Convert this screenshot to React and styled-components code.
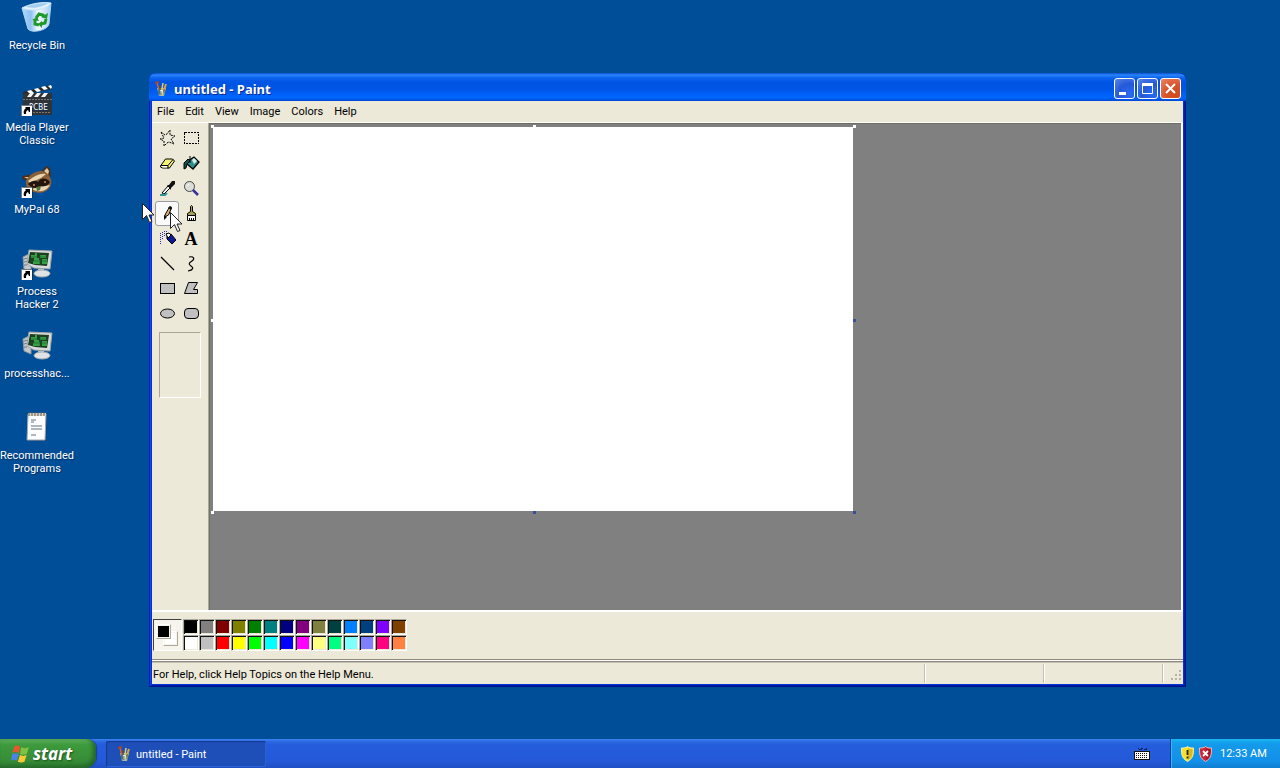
import React from 'react';
import styled, { createGlobalStyle, css } from 'styled-components';

const GlobalStyle = createGlobalStyle`
  *, *::before, *::after { box-sizing: border-box; }
  body {
    margin: 0;
    font-family: Roboto, "Noto Sans", sans-serif;
    font-size: 11px;
    line-height: 13px;
    color: #000;
    cursor: default;
  }
  button {
    margin: 0;
    padding: 0;
    border: 0;
    background: none;
    font: inherit;
    color: inherit;
  }
  svg { display: block; }
`;

const Desktop = styled.div`
  position: relative;
  display: flex;
  flex-direction: column;
  min-height: 100vh;
  overflow: hidden;
  background: #004e98;
`;

const IconColumn = styled.main`
  flex: 1;
  display: flex;
  flex-direction: column;
  align-items: flex-start;
`;

const Shortcut = styled.button`
  display: flex;
  flex-direction: column;
  align-items: center;
  width: 74px;
  height: 82px;
  padding-top: 2px;
  gap: 5px;
  color: #fff;
  text-align: center;
  text-shadow: 1px 1px 1px #00305f;
`;

const AppWindow = styled.section`
  position: absolute;
  top: 73px;
  right: 94px;
  bottom: 81px;
  left: 149px;
  display: flex;
  flex-direction: column;
  padding: 0 3px 3px;
  border-radius: 7px 7px 0 0;
  background: #0831d9;
  box-shadow: inset 1px 0 #0019cf, inset -1px -1px #00138c, inset 2px 0 #0a45e6, inset -2px -2px #001ea0;
`;

const TitleBar = styled.header`
  display: flex;
  align-items: center;
  height: 28px;
  margin: 0 -3px;
  padding: 3px 5px 0 4px;
  border-radius: 7px 7px 0 0;
  background: linear-gradient(#0a4fd0 0, #2a86fb 2px, #0a62ee 5px, #0054e3 9px, #0055e5 16px, #0062fb 22px, #0066ff 25px, #0046d4 28px);
`;

const WindowTitle = styled.h1`
  flex: 1;
  margin: 0 0 0 5px;
  font-family: "Noto Sans", sans-serif;
  font-size: 13px;
  line-height: 16px;
  font-weight: 700;
  color: #fff;
  text-shadow: 1px 1px #0a2a8c;
`;

const CaptionButtons = styled.div`
  display: flex;
  gap: 2px;
`;

const CaptionButton = styled.button`
  width: 21px;
  height: 21px;
  border: 1px solid #fff;
  border-radius: 3px;
  background: ${p => p.$close
    ? 'radial-gradient(circle at 75% 80%, #d04a1c, #d9532c 45%, #e88768)'
    : 'radial-gradient(circle at 75% 80%, #2a6cf0, #2459d8 50%, #5a86e8)'};
`;

const Client = styled.div`
  flex: 1;
  display: flex;
  flex-direction: column;
  min-height: 0;
  background: #ece9d8;
`;

const MenuBar = styled.nav`
  display: flex;
  height: 22px;
  padding: 0 0 1px;
  border-bottom: 1px solid #fff;
`;

const MenuItem = styled.button`
  padding: 0 6px 0 5px;
`;

const Workspace = styled.div`
  flex: 1;
  display: flex;
  min-height: 0;
  border-right: 2px solid #fff;
  border-bottom: 2px solid #fff;
`;

const ToolBox = styled.aside`
  width: 57px;
  padding: 3px;
  border-right: 1px solid #aca899;
`;

const ToolGrid = styled.div`
  display: grid;
  grid-template-columns: repeat(2, 24px);
  grid-auto-rows: 25px;
`;

const ToolButton = styled.button`
  display: grid;
  place-items: center;
  ${p => p.$active && css`
    border: 1px solid #9a9aa4;
    border-radius: 3px;
    background: #fafafa;
  `}
`;

const LetterTool = styled.span`
  font-family: "Liberation Serif", serif;
  font-size: 18px;
  line-height: 18px;
  font-weight: 700;
`;

const ToolOptions = styled.div`
  width: 42px;
  height: 66px;
  margin: 6px 0 0 4px;
  border: 1px solid;
  border-color: #aca899 #fff #fff #aca899;
`;

const Viewport = styled.div`
  flex: 1;
  min-width: 0;
  overflow: hidden;
  padding: 1px;
  background: #808080;
  border-top: 1px solid #716f64;
  border-left: 1px solid #716f64;
`;

const Paper = styled.div`
  position: relative;
  width: 644px;
  height: 388px;
  border: 2px solid #808080;
  background: #fff;
  background-clip: padding-box;
`;

const handleX = { left: '-2px', center: '320px', right: '640px' };
const handleY = { top: '-2px', middle: '192px', bottom: '384px' };

const Handle = styled.i`
  position: absolute;
  left: ${p => handleX[p.$x]};
  top: ${p => handleY[p.$y]};
  width: 3px;
  height: 3px;
  background: ${p => (p.$live ? '#3a4f9c' : '#fff')};
`;

const ColorBox = styled.div`
  display: flex;
  align-items: flex-start;
  gap: 1px;
  height: 48px;
  padding: 7px 1px;
  border-bottom: 1px solid #8d8a7c;
`;

const CurrentColors = styled.div`
  position: relative;
  width: 29px;
  height: 32px;
  border: 1px solid;
  border-color: #404040 #fff #fff #404040;
  background: #f6f4ec;
`;

const ColorChip = styled.span`
  position: absolute;
  left: ${p => p.$at}px;
  top: ${p => p.$at + 2}px;
  width: 15px;
  height: 15px;
  border: 1px solid;
  border-color: #fff #aca899 #aca899 #fff;
  background: ${p => p.$color};
  box-shadow: inset 0 0 0 1px #f6f4ec;
`;

const Palette = styled.div`
  display: grid;
  grid-template-columns: repeat(14, 16px);
  grid-auto-rows: 16px;
`;

const Swatch = styled.button`
  border: 1px solid;
  border-color: #aca899 #fff #fff #aca899;
  background: ${p => p.$color};
  box-shadow: inset 1px 1px #111, inset -1px -1px #ece9d8;
`;

const StatusBar = styled.footer`
  display: grid;
  grid-template-columns: 1fr 119px 119px 19px;
  height: 24px;
  padding: 3px 0 1px;
  border-top: 1px solid #fff;
  box-shadow: inset 0 1px #8d8a7c, inset 0 2px #c5c2b4;
`;

const StatusCell = styled.div`
  padding: 4px 1px 0;
  border-right: ${p => (p.$last ? 0 : 1)}px solid #fff;
  box-shadow: ${p => (p.$last ? 'none' : 'inset -1px 0 #c2bfae')};
`;

const Grip = styled.svg`
  margin: 1px 0 0 5px;
`;

const TaskBar = styled.footer`
  display: flex;
  height: 29px;
  background: linear-gradient(#3c81f3 0, #2a66e0 3px, #245ddb 6px, #2459d8 22px, #1f4fc4 29px);
`;

const StartButton = styled.button`
  display: flex;
  align-items: center;
  gap: 3px;
  width: 96px;
  padding-left: 10px;
  border-radius: 0 9px 11px 0;
  background: linear-gradient(#5eac56 0, #53a653 2px, #3c9a3c 6px, #388e38 20px, #2f7d2f 29px);
  box-shadow: inset -3px -2px 4px #22652a, 1px 0 1px #1a3f9c;
  font-family: "Noto Sans", sans-serif;
  font-size: 17px;
  line-height: 24px;
  font-style: italic;
  font-weight: 700;
  color: #fff;
  text-shadow: 1px 1px 2px #1f4f20;
`;

const TaskButton = styled.button`
  display: flex;
  align-items: center;
  gap: 4px;
  width: 160px;
  margin: 2px auto 1px 10px;
  padding-left: 10px;
  border-radius: 2px;
  background: #1e4fb9;
  box-shadow: inset 1px 1px 1px #153a8f, inset -1px -1px #2a62d4;
  color: #fff;
`;

const InputMethod = styled.button`
  padding: 0 20px;
`;

const Tray = styled.div`
  display: flex;
  align-items: center;
  gap: 5px;
  width: 110px;
  padding: 0 0 0 10px;
  border-left: 1px solid #0a3c9c;
  background: linear-gradient(#19b9f3 0, #149bea 4px, #1290e8 22px, #0f7fd0 29px);
  box-shadow: inset 1px 0 #35b8f5;
  color: #fff;
`;

const Clock = styled.time`
  margin-left: 3px;
`;

const Pointer = styled.svg`
  position: absolute;
  left: ${p => p.$x}px;
  top: ${p => p.$y}px;
  pointer-events: none;
`;

const ShortcutArrow = () => (
  <g shapeRendering="crispEdges">
    <rect x="0" y="21" width="11" height="11" fill="#fff" stroke="#222" strokeWidth="0.6" />
    <path d="M4 23h5v5h-1l-1-2c-2 1-2 2-2 4H3c-1-3 0-4 2-6z" fill="#000" shapeRendering="auto" />
  </g>
);

const RecycleIcon = () => (
  <svg width="32" height="32" viewBox="0 0 32 32">
    <defs>
      <linearGradient id="bin"><stop stopColor="#b4d8fa" /><stop offset=".3" stopColor="#8cc0f4" /><stop offset=".55" stopColor="#f4fbff" /><stop offset="1" stopColor="#a9cff2" /></linearGradient>
    </defs>
    <path d="M1 6l29-5-2 21c-1 6-17 10-21 5z" fill="url(#bin)" stroke="#a9d2f6" />
    <path d="M1 6C6 3 20-1 30 1c-4 7-20 9-29 5z" fill="#e2f1fc" stroke="#c8e4fa" />
    <path d="M5 5c6-3 15-4 22-4-5 4-15 6-22 4z" fill="#a3cdf0" />
    <g fill="none" stroke="#1f9a2a" strokeWidth="3">
      <path d="M15 16l3-4 4 1 1 2M25 17l-1 4-4 1M18 23l-4-1v-4" />
    </g>
    <path d="M20 15l6 2 1-6zM21 19v7l-4-4zM11 18l5-3 2 4z" fill="#1f9a2a" />
  </svg>
);

const ClapperIcon = () => (
  <svg width="32" height="32" viewBox="0 0 32 32">
    <path d="M2 8L31 1v4L2 11z" fill="#26282b" />
    <path d="M6 7l4-1 3 3-4 1zM13 5l4-1 3 3-4 1zM20 3l4-1 3 3-4 1zM27 2l3-1 1 2-1 2z" fill="#fff" />
    <rect x="2" y="9" width="29" height="22" fill="#303338" />
    <path d="M9 9h4l-3 4H6zM16 9h4l-3 4h-4zM23 9h4l-3 4h-4z" fill="#f5f5f5" />
    <path d="M2 15.500h29M3 28.500h27" stroke="#777" strokeDasharray="2 1" />
    <text x="8" y="26" fontFamily="DejaVu Sans Condensed, sans-serif" fontSize="8" fill="#fff">PCBE</text>
    <ShortcutArrow />
  </svg>
);

const RaccoonIcon = () => (
  <svg width="32" height="32" viewBox="0 0 32 32">
    <path d="M20 6l5-6 4 2 1 8-3 4zM2 14l-1-4 7-1 6-2-2 6z" fill="#4a2e1c" />
    <path d="M23 5l3-3 2 3-1 4zM3 11l5 0-1 2z" fill="#e5c9a0" />
    <path d="M5 15C8 8 18 3 24 6c6 4 8 10 5 15-3 5-10 7-16 5C7 24 4 20 5 15z" fill="#8a6038" />
    <path d="M7 15c6-5 12-8 18-7l-5 4-11 5zM11 23c6 4 14 3 18-4l-5 1-7 1z" fill="#e9d5b2" />
    <path d="M7 18c4-4 8-4 10-2 3-5 9-4 12 0-2 4-6 5-9 4-4 3-9 3-13-2z" fill="#21150f" />
    <circle cx="13" cy="19" r="1" fill="#cf8b3e" /><circle cx="24" cy="16" r="1" fill="#cf8b3e" />
    <path d="M15 21l5-1-1 4-3 1z" fill="#4d7a3a" />
    <ShortcutArrow />
  </svg>
);

const MonitorIcon = ({ linked }) => (
  <svg width="32" height="32" viewBox="0 0 32 32">
    <path d="M2 9l8-4v19l-7-3z" fill="#c3c8cc" stroke="#8b959d" />
    <path d="M3 11l4-1M3 14l4-1M3 17h3" stroke="#6f7b85" />
    <path d="M8 2l23 1-2 18-16-1-7-4z" fill="#d9dcdc" stroke="#9ca4a5" />
    <path d="M9 4l19 1-2 13-12-1-7-2z" fill="#1c3d22" />
    <path d="M10 7h4V5h2v5h2v3h-5v-3h-3zM19 7h6v3h-6zM12 13h3v-1h4v4h-7zM21 11h5v5h-5z" fill="#35a045" />
    <path d="M10 9h17M9 13h17M19 5v12" stroke="#1c5a2a" strokeWidth=".6" />
    <path d="M17 21l6 0v3l-6 1z" fill="#c3c7c9" />
    <ellipse cx="21" cy="25.500" rx="8" ry="3.500" fill="#dfe3e5" stroke="#a4abaf" />
    {linked && <ShortcutArrow />}
  </svg>
);

const NotepadIcon = () => (
  <svg width="32" height="32" viewBox="0 0 32 32">
    <path d="M8 3h18l-1 26H7z" fill="#27384d" opacity=".6" />
    <path d="M7 2h18l-1 26H6z" fill="#fdfdfd" stroke="#9aa6b5" />
    <path d="M7 1h18v3H7z" fill="#d6d2c8" />
    <path d="M8 0v4m3-4v4m3-4v4m3-4v4m3-4v4m3-4v4" stroke="#665a4c" />
    <path d="M10 8h5M10 10h3M10 14h11M10 17h11M10 23h5" stroke="#65717e" />
  </svg>
);

const PaintIcon = ({ size = 16 }) => (
  <svg width={size} height={size} viewBox="0 0 16 16">
    <path d="M4 7l9 0-2 8H6z" fill="#a9b596" />
    <path d="M4 2l2 7" stroke="#c9653b" strokeWidth="1.500" />
    <path d="M7 4l0 6" stroke="#5e4a30" strokeWidth="1.500" />
    <path d="M9 8l1-6" stroke="#d9c990" strokeWidth="1.500" />
    <path d="M11 9l2-6" stroke="#d9a939" strokeWidth="2" />
    <path d="M5 8v4l2 3V9z" fill="#568da0" /><path d="M7 9h3l-1 6z" fill="#eef2e4" /><path d="M10 9l2-1-1 6z" fill="#60713a" />
    <path d="M2 2l4-1" stroke="#a0452f" strokeWidth="2" /><path d="M8 10v4M6 9v4" stroke="#333" strokeWidth=".6" />
  </svg>
);

const FlagIcon = () => (
  <svg width="20" height="20" viewBox="0 0 18 18">
    <path d="M4 2c2-1 4-1 5 0L8 8C6 7 4 7 2 8z" fill="#e8582c" />
    <path d="M10 3c2 1 4 1 7 0l-2 6c-2 1-4 1-6 0z" fill="#7fc241" />
    <path d="M2 9c2-1 4-1 6 0l-2 6c-2-1-3-1-5 0z" fill="#4b83e8" />
    <path d="M9 10c2 1 4 1 6 0l-2 6c-2 1-4 1-6 0z" fill="#f9c935" />
  </svg>
);

const KeyboardIcon = () => (
  <svg width="16" height="14" viewBox="0 0 16 14" shapeRendering="crispEdges">
    <path d="M4 1h1v1h2V1h2v1h3V1h1v2h-3V2H8v1H5V2H4z" fill="#0c245e" />
    <rect x="0" y="4" width="16" height="9" fill="#111" />
    <path d="M1 5h14v7H1z" fill="#fff" />
    <path d="M2 6.500h12M2 8.500h12M2 10.500h12" stroke="#111" strokeDasharray="1 1" />
  </svg>
);

const ShieldIcon = ({ danger }) => (
  <svg width="13" height="16" viewBox="0 0 13 16">
    <path d="M6.500.5C8 2 10 2 12.500 2c0 6 0 10-6 13.500C.5 12 .5 8 .5 2 3 2 5 2 6.500.5z" fill={danger ? '#cf2435' : '#f8e02d'} stroke={danger ? '#dfbfc5' : '#f6efae'} />
    <path d="M7 2c1 1 3 1 4.500 1C12 8 11 12 7 14z" fill={danger ? '#a61526' : '#d9b91c'} />
    {danger
      ? <path d="M4 5l5 5M9 5l-5 5" stroke="#fff" strokeWidth="1.800" />
      : <path d="M6.500 4v5M6.500 10.500v2" stroke="#222" strokeWidth="1.800" />}
  </svg>
);

const toolArt = {
  freeform: <path d="M2 2l4 3 2-1 3-4 0 5 5 1-4 3 3 5-5-2-2 1-3 3 0-5-4-2 4-1z" fill="none" stroke="#000" strokeDasharray="2 1" />,
  select: <path d="M1.500 2.500h14v11h-14z" fill="none" stroke="#000" strokeDasharray="2 1" shapeRendering="crispEdges" />,
  eraser: <>
    <path d="M1.500 11l5-7h7l2 2-5 7h-7l-2-1z" fill="#f4f07a" stroke="#000" />
    <path d="M2 10.500h7l5-6M9 10.500v3" fill="none" stroke="#000" /><path d="M3 11h5v1.500H4z" fill="#fff" />
  </>,
  fill: <>
    <path d="M5 6l6-4 5 5-6 7-6-5z" fill="#2f8f88" stroke="#000" strokeWidth="1.300" />
    <path d="M9 5l2-2 3 3-3 3z" fill="#d6eeea" />
    <path d="M7 1v7" stroke="#000" /><path d="M1 14V8l4-4 2 2-3 3-1 4z" fill="#164f52" stroke="#000" />
  </>,
  picker: <>
    <path d="M3 13l6-7 2 2-6 6z" fill="#fff" stroke="#000" />
    <path d="M8 5l2 0 3-4 3 0v3l-4 4v2z" fill="#111" /><path d="M1 15h5l2-2" fill="none" stroke="#2f9a93" strokeWidth="2" />
  </>,
  zoom: <>
    <circle cx="6.500" cy="6.500" r="5" fill="#dcdcd8" stroke="#444" /><path d="M4 6l2-2" stroke="#fff" />
    <path d="M10 10l5 5" stroke="#33339a" strokeWidth="2.500" />
  </>,
  pencil: <>
    <path d="M5.500 12l1-3 4-7 2 1-3 7z" fill="#dcb27a" stroke="#000" /><path d="M5 15v-5l3 2zM9 3l2-2 2 1-1 3z" fill="#111" />
  </>,
  brush: <>
    <path d="M7.500 1.500q1-2 2 0v5l3 2v2h-8v-2l3-2z" fill="#a3a050" stroke="#000" />
    <path d="M4.500 10.500h8v5h-8z" fill="#fff" stroke="#000" /><path d="M6.500 13v3M8.500 13v3M10.500 13v3" stroke="#000" />
  </>,
  spray: <>
    <path d="M1.500 3v11M3.500 2v8M5.500 1v6M7.500 1v4" stroke="#2a2ab8" strokeDasharray="1 1" />
    <path d="M8 6l4-2 5 6-4 4-5-5z" fill="#111a96" stroke="#000" /><path d="M7 4l3-1 2 2-3 3z" fill="#fff" stroke="#000" />
  </>,
  line: <path d="M2 2l13 13" stroke="#000" strokeWidth="1.200" />,
  curve: <path d="M6 2c5-1 6 2 3 4s-4 3-1 5 2 4-3 5" fill="none" stroke="#000" strokeWidth="1.200" />,
  rect: <path d="M1.500 3.500h14v10h-14z" fill="#c0c0c0" stroke="#000" shapeRendering="crispEdges" />,
  polygon: <path d="M5.500 2.500h9l-4 7h4v4H1.500z" fill="#c0c0c0" stroke="#000" />,
  ellipse: <ellipse cx="8.500" cy="8.500" rx="7" ry="4.500" fill="#c0c0c0" stroke="#000" />,
  rounded: <rect x="1.500" y="3.500" width="14" height="10" rx="3.500" fill="#c0c0c0" stroke="#000" />,
};

const tools = [
  ['Free-Form Select', 'freeform'], ['Select', 'select'],
  ['Eraser', 'eraser'], ['Fill With Color', 'fill'],
  ['Pick Color', 'picker'], ['Magnifier', 'zoom'],
  ['Pencil', 'pencil'], ['Brush', 'brush'],
  ['Airbrush', 'spray'], ['Text', 'text'],
  ['Line', 'line'], ['Curve', 'curve'],
  ['Rectangle', 'rect'], ['Polygon', 'polygon'],
  ['Ellipse', 'ellipse'], ['Rounded Rectangle', 'rounded'],
];

const colors = [
  '#000000', '#808080', '#800000', '#808000', '#008000', '#008080', '#000080', '#800080', '#808040', '#004040', '#0080ff', '#004080', '#8000ff', '#804000',
  '#ffffff', '#c0c0c0', '#ff0000', '#ffff00', '#00ff00', '#00ffff', '#0000ff', '#ff00ff', '#ffff80', '#00ff80', '#80ffff', '#8080ff', '#ff0080', '#ff8040',
];

const handles = [
  ['left', 'top'], ['center', 'top'], ['right', 'top'], ['left', 'middle'], ['left', 'bottom'],
  ['right', 'middle', true], ['center', 'bottom', true], ['right', 'bottom', true],
];

const shortcuts = [
  ['Recycle Bin', <RecycleIcon />],
  ['Media Player Classic', <ClapperIcon />],
  ['MyPal 68', <RaccoonIcon />],
  ['Process Hacker 2', <MonitorIcon linked />],
  ['processhac...', <MonitorIcon />],
  ['Recommended Programs', <NotepadIcon />],
];

const MousePointer = ({ x, y }) => (
  <Pointer $x={x} $y={y} width="13" height="21" viewBox="0 0 13 21">
    <path d="M.5.5v16l4-4 3 7 2.500-1-3-6.500H12z" fill="#fff" stroke="#222" />
  </Pointer>
);

export default function App() {
  return (
    <Desktop>
      <GlobalStyle />
      <IconColumn>
        {shortcuts.map(([label, icon]) => (
          <Shortcut key={label}>{icon}<span>{label}</span></Shortcut>
        ))}
      </IconColumn>

      <AppWindow>
        <TitleBar>
          <PaintIcon />
          <WindowTitle>untitled - Paint</WindowTitle>
          <CaptionButtons>
            <CaptionButton aria-label="Minimize">
              <svg width="19" height="19"><path d="M4 13h7v3H4z" fill="#fff" /></svg>
            </CaptionButton>
            <CaptionButton aria-label="Maximize">
              <svg width="19" height="19"><path d="M4.500 5h10v9.500h-10z" fill="none" stroke="#fff" /><path d="M4 4h11v3H4z" fill="#fff" /></svg>
            </CaptionButton>
            <CaptionButton $close aria-label="Close">
              <svg width="19" height="19"><path d="M5 5l9 9M14 5l-9 9" stroke="#fff" strokeWidth="2" /></svg>
            </CaptionButton>
          </CaptionButtons>
        </TitleBar>

        <Client>
          <MenuBar>
            {['File', 'Edit', 'View', 'Image', 'Colors', 'Help'].map(name => (
              <MenuItem key={name}>{name}</MenuItem>
            ))}
          </MenuBar>

          <Workspace>
            <ToolBox>
              <ToolGrid>
                {tools.map(([name, art]) => (
                  <ToolButton key={name} aria-label={name} $active={art === 'pencil'}>
                    {art === 'text'
                      ? <LetterTool>A</LetterTool>
                      : <svg width="17" height="17" viewBox="0 0 17 17">{toolArt[art]}</svg>}
                  </ToolButton>
                ))}
              </ToolGrid>
              <ToolOptions />
            </ToolBox>
            <Viewport>
              <Paper>
                {handles.map(([x, y, live]) => <Handle key={x + y} $x={x} $y={y} $live={live} />)}
              </Paper>
            </Viewport>
          </Workspace>

          <ColorBox>
            <CurrentColors>
              <ColorChip $at={9} $color="#fff" />
              <ColorChip $at={2} $color="#000" />
            </CurrentColors>
            <Palette>
              {colors.map(color => <Swatch key={color} aria-label={color} $color={color} />)}
            </Palette>
          </ColorBox>

          <StatusBar>
            <StatusCell>For Help, click Help Topics on the Help Menu.</StatusCell>
            <StatusCell />
            <StatusCell />
            <StatusCell $last>
              <Grip width="13" height="12" fill="#b8b4a2">
                <path d="M9 1h2v2H9zM5 5h2v2H5zM9 5h2v2H9zM1 9h2v2H1zM5 9h2v2H5zM9 9h2v2H9z" />
              </Grip>
            </StatusCell>
          </StatusBar>
        </Client>
      </AppWindow>

      <TaskBar>
        <StartButton><FlagIcon />start</StartButton>
        <TaskButton><PaintIcon />untitled - Paint</TaskButton>
        <InputMethod aria-label="Keyboard layout"><KeyboardIcon /></InputMethod>
        <Tray>
          <ShieldIcon />
          <ShieldIcon danger />
          <Clock>12:33 AM</Clock>
        </Tray>
      </TaskBar>

      <MousePointer x={142} y={203} />
      <MousePointer x={170} y={212} />
    </Desktop>
  );
}
